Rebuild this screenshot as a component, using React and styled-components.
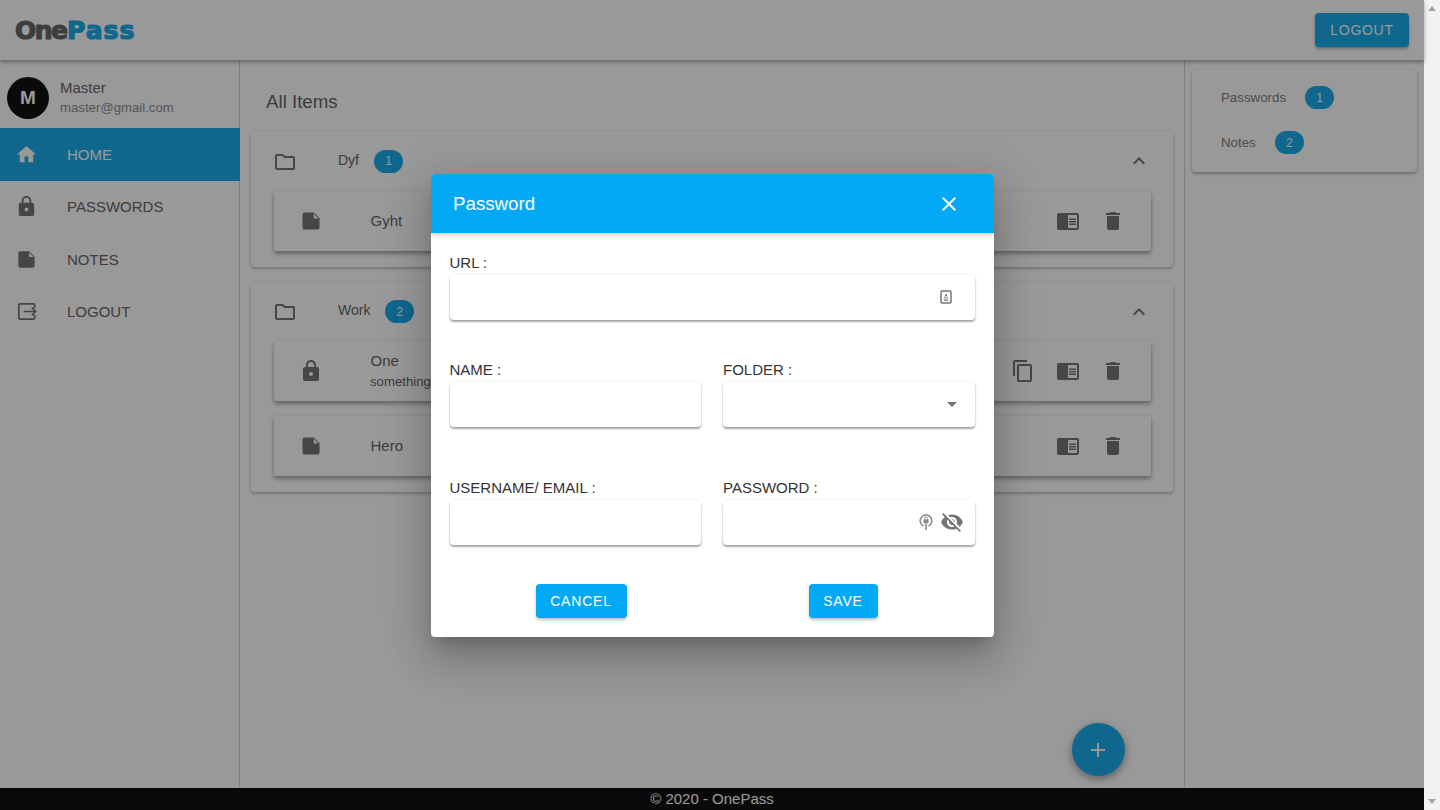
import React from "react";
import styled, { createGlobalStyle } from "styled-components";
import {
  MdHome, MdLock, MdOutlineFolder, MdKeyboardArrowUp, MdChromeReaderMode,
  MdDelete, MdContentCopy, MdClose, MdArrowDropDown, MdVisibilityOff, MdAdd,
} from "react-icons/md";

const Global = createGlobalStyle`
  * { box-sizing: border-box; }
  html, body { margin: 0; padding: 0; height: 810px; overflow: hidden; background: #fff; }
  body { font-family: "Liberation Sans", Arial, sans-serif; color: #666; }
`;

const BLUE = "#03a9f4";
const PAGE_BLUE = "#1aacec";

const Shell = styled.div`display: flex; width: 1440px; height: 810px; overflow: hidden;`;
const Page = styled.div`
  position: relative; width: 1424px; height: 810px;
  display: grid; grid-template-rows: 60px 1fr 23px; background: #fff;
`;
const Scrollbar = styled.div`
  width: 16px; height: 810px; background: #f1f3f3;
  display: flex; flex-direction: column; justify-content: space-between; align-items: center;
  padding: 6px 0;
`;
const Arrow = styled.span`
  width: 0; height: 0; border-left: 4.5px solid transparent; border-right: 4.5px solid transparent;
  ${p => p.$down ? "border-top: 5px solid #a3a3a3;" : "border-bottom: 5px solid #a3a3a3;"}
`;

const Header = styled.header`
  display: flex; align-items: center; justify-content: space-between;
  padding: 0 15px; background: #fff; z-index: 2;
  box-shadow: 0 2px 4px rgba(0,0,0,.35);
`;
const Logo = styled.div`
  font-family: "DejaVu Sans", sans-serif; font-weight: 700; font-size: 25px; letter-spacing: -1.5px;
  -webkit-text-stroke: 1.2px currentColor; color: #666; line-height: 30px; padding-top: 2px;
  span { color: ${PAGE_BLUE}; letter-spacing: 1px; margin-left: .5px; }
`;
const HeaderButton = styled.button`
  width: 94px; height: 34px; border: 0; border-radius: 4px; background: ${PAGE_BLUE}; color: #fff;
  font: 400 14px "Liberation Sans", sans-serif; letter-spacing: .7px; padding: 0;
  box-shadow: 0 2px 3px rgba(0,0,0,.3);
`;

const Body = styled.div`display: grid; grid-template-columns: 240px 1fr 240px; min-height: 0;`;

const Sidebar = styled.aside`border-right: 1px solid #cfcfcf; display: flex; flex-direction: column;`;
const UserRow = styled.div`height: 68px; display: flex; align-items: center; padding: 8px 0 0 7px; gap: 11px;`;
const Avatar = styled.div`
  width: 42px; height: 42px; border-radius: 50%; background: #111; color: #fff;
  display: flex; align-items: center; justify-content: center; font-weight: 700; font-size: 19px;
`;
const UserText = styled.div`display: flex; flex-direction: column; gap: 2px; margin-top: -2px;`;
const UserName = styled.div`font-size: 15px; line-height: 18px; color: #666;`;
const UserMail = styled.div`font-size: 13.2px; line-height: 17px; color: #8f8f8f;`;
const NavItem = styled.div`
  height: 52.5px; display: flex; align-items: center; padding-left: 15px; gap: 29px; font-size: 15px;
  margin-right: ${p => p.$active ? "-1px" : "0"};
  background: ${p => p.$active ? PAGE_BLUE : "transparent"};
  color: ${p => p.$active ? "#fff" : "#666"};
  svg { color: ${p => p.$active ? "#fff" : "#757575"}; flex: none; }
`;

const Main = styled.main`padding: 0 11px; position: relative; min-width: 0;`;
const Heading = styled.h3`
  margin: 0 0 0 15px; padding-top: 31px; height: 71px; line-height: 22px; font-size: 18.72px; font-weight: 400; color: #666;
`;
const FolderList = styled.div`display: flex; flex-direction: column; gap: 15px;`;
const FolderCard = styled.section`
  border-radius: 4px; background: #fff; padding: 0 22px 16px 23px;
  box-shadow: 0 2px 3px rgba(0,0,0,.22), 0 0 3px rgba(0,0,0,.08);
`;
const FolderHead = styled.div`
  height: ${p => p.$h}px; display: flex; align-items: center; color: #666; font-size: 14px;
  svg { color: #757575; flex: none; }
`;
const FolderIcon = styled.span`display: flex; margin: 0 41px 0 -1px; padding-top: 1px;`;
const FolderName = styled.span`margin-top: ${p => p.$lift}px; width: ${p => p.$w}px;`;
const Badge = styled.span`
  width: 29px; height: 23px; border-radius: 12px; background: ${PAGE_BLUE}; color: #fff;
  display: inline-flex; align-items: center; justify-content: center; font-size: 12px;
`;
const Spacer = styled.span`flex: 1;`;
const ItemList = styled.div`display: flex; flex-direction: column; gap: 15px;`;
const Item = styled.div`
  height: 60px; display: flex; align-items: center; padding: 0 26px 0 25px; border-radius: 2px; background: #fff;
  box-shadow: 0 3px 4px rgba(0,0,0,.32), 0 0 3px rgba(0,0,0,.1);
  svg { color: #757575; flex: none; }
`;
const ItemText = styled.div`margin-left: 47px; display: flex; flex-direction: column; gap: 3px; white-space: nowrap;`;
const ItemName = styled.div`font-size: 15px; line-height: 18px; color: #666; padding-left: .5px;`;
const ItemSub = styled.div`font-size: 13.2px; line-height: 17px; color: #666;`;
const Actions = styled.div`display: flex; gap: 21px; margin-left: auto; align-items: center;`;

const Fab = styled.button`
  position: absolute; left: 831.5px; top: 663px; width: 53px; height: 53px; border-radius: 50%; border: 0;
  background: ${PAGE_BLUE}; color: #fff; display: flex; align-items: center; justify-content: center; padding: 0;
  box-shadow: 0 3px 8px rgba(0,0,0,.4);
`;

const Aside = styled.aside`border-left: 1px solid #cfcfcf; padding: 10px 7px 0 7px;`;
const SummaryCard = styled.div`
  height: 102px; border-radius: 4px; padding: 16px 0 0 29px; background: #fff;
  display: flex; flex-direction: column; gap: 22px;
  box-shadow: 0 2px 3px rgba(0,0,0,.25), 0 0 3px rgba(0,0,0,.08);
`;
const SummaryRow = styled.div`display: flex; align-items: center; gap: 19px; font-size: 13.3px; color: #808080; height: 23px;`;

const Footer = styled.footer`
  background: #111; color: #fff; text-align: center; font-size: 15px; line-height: 22px; border-top: 1px solid #fff;
`;

const Backdrop = styled.div`
  position: absolute; inset: 0; z-index: 5; background: rgba(0,0,0,.4);
  display: flex; align-items: center; justify-content: center;
`;
const Dialog = styled.div`
  width: 563px; height: 463px; background: #fff; border-radius: 4px; overflow: hidden; margin: 1px 0 0 1px;
  box-shadow: 0 11px 15px -7px rgba(0,0,0,.2), 0 24px 38px 3px rgba(0,0,0,.14), 0 9px 46px 8px rgba(0,0,0,.12);
`;
const DialogHeader = styled.div`
  height: 59px; background: ${BLUE}; color: #fff; display: flex; align-items: center; justify-content: space-between;
  padding: 0 33px 0 22px; box-shadow: 0 2px 4px rgba(0,0,0,.22); position: relative;
`;
const DialogTitle = styled.h3`margin: 0; font-size: 18.72px; font-weight: 400;`;
const Form = styled.div`padding: 21px 19.5px 0 18.5px; display: flex; flex-direction: column;`;
const FieldRow = styled.div`
  display: grid; grid-template-columns: 1fr 1fr; column-gap: 22px; margin-top: ${p => p.$top || 0}px;
`;
const Field = styled.div`grid-column: ${p => p.$wide ? "1 / -1" : "auto"};`;
const Label = styled.div`font-size: 15px; line-height: 18px; color: #333; margin-bottom: 3px;`;
const InputBox = styled.div`
  height: 45px; border-radius: 4px; background: #fff; display: flex; align-items: center; justify-content: flex-end;
  padding: 0 ${p => p.$pr || 11}px 1px 0; gap: ${p => p.$gap || 0}px; color: #757575;
  box-shadow: 0 2px 2px rgba(0,0,0,.33), 0 0 3px rgba(0,0,0,.1);
`;
const Buttons = styled.div`display: flex; justify-content: space-between; padding: 0 97px 0 86px; margin-top: 39px;`;
const DialogButton = styled.button`
  height: 34px; width: ${p => p.$w}px; padding: 0; border: 0; border-radius: 4px; background: ${BLUE}; color: #fff;
  font: 400 14px "Liberation Sans", sans-serif; letter-spacing: .8px;
  box-shadow: 0 2px 3px rgba(0,0,0,.25);
`;

const NoteIcon = ({ side = 24 }) => (
  <svg width={side} height={side} viewBox="0 0 24 24">
    <path d="M5.6 3.5h9.2l5.7 5.7v9.2c0 1.2-1 2.1-2.1 2.1H5.6c-1.2 0-2.1-.9-2.1-2.1V5.6c0-1.2.9-2.1 2.1-2.1z" fill="#757575" />
    <path d="M14.6 4.6v4.8h4.8z" fill="#fff" />
  </svg>
);
const LogoutIcon = () => (
  <svg width="23" height="23" viewBox="0 0 24 24" fill="none" stroke="#757575" strokeWidth="1.8">
    <path d="M20.5 8.5V5.2c0-.7-.5-1.2-1.2-1.2H5.2C4.5 4 4 4.5 4 5.2v13.6c0 .7.5 1.2 1.2 1.2h14.1c.7 0 1.2-.5 1.2-1.2v-3.3" />
    <path d="M9 12h12.5M17.5 8l4 4-4 4" />
  </svg>
);
const UrlIcon = () => (
  <svg width="12" height="14" viewBox="0 0 12 14" fill="none">
    <rect x="1" y="1" width="10" height="12" rx="1" stroke="#757575" strokeWidth="1.5" />
    <path d="M6 3l1.2 3H4.8z" fill="#757575" />
    <path d="M3.8 7.2h4.4M3.8 9h4.4M3.8 10.6h4.4" stroke="#8a8a8a" strokeWidth="1" />
  </svg>
);
const KeyIcon = () => (
  <svg width="14" height="18" viewBox="0 0 14 18" fill="none">
    <path d="M4.5 13A5.8 5.8 0 1 1 9.5 13" stroke="#8a8a8a" strokeWidth="1.6" />
    <path d="M7 11v6" stroke="#8a8a8a" strokeWidth="1.6" />
    <rect x="4.5" y="6.2" width="5" height="4.4" rx=".8" fill="#8a8a8a" />
    <path d="M5.6 6.5V5.3a1.4 1.4 0 0 1 2.8 0v1.2" stroke="#8a8a8a" strokeWidth=".9" />
  </svg>
);

const Row = ({ icon: I, name, sub, copy }) => (
  <Item>
    <I size={24} side={24} />
    <ItemText>
      <ItemName>{name}</ItemName>
      {sub && <ItemSub>{sub}</ItemSub>}
    </ItemText>
    <Actions>
      {copy && <MdContentCopy size={24} />}
      <MdChromeReaderMode size={24} />
      <MdDelete size={24} />
    </Actions>
  </Item>
);

const Folder = ({ name, count, width, h, lift, children }) => (
  <FolderCard>
    <FolderHead $h={h}>
      <FolderIcon><MdOutlineFolder size={24} /></FolderIcon>
      <FolderName $w={width} $lift={lift}>{name}</FolderName>
      <Badge>{count}</Badge>
      <Spacer />
      <MdKeyboardArrowUp size={24} />
    </FolderHead>
    <ItemList>{children}</ItemList>
  </FolderCard>
);

export default function App() {
  return (
    <Shell>
      <Global />
      <Page>
        <Header>
          <Logo>One<span>Pass</span></Logo>
          <HeaderButton>LOGOUT</HeaderButton>
        </Header>
        <Body>
          <Sidebar>
            <UserRow>
              <Avatar>M</Avatar>
              <UserText>
                <UserName>Master</UserName>
                <UserMail>master@gmail.com</UserMail>
              </UserText>
            </UserRow>
            <NavItem $active><MdHome size={23} />HOME</NavItem>
            <NavItem><MdLock size={23} />PASSWORDS</NavItem>
            <NavItem><NoteIcon side={23} />NOTES</NavItem>
            <NavItem><LogoutIcon />LOGOUT</NavItem>
          </Sidebar>
          <Main>
            <Heading>All Items</Heading>
            <FolderList>
              <Folder name="Dyf" count="1" width={36} h={60} lift={-2}>
                <Row icon={NoteIcon} name="Gyht" />
              </Folder>
              <Folder name="Work" count="2" width={47} h={59} lift={-4}>
                <Row icon={MdLock} name="One" sub="something" copy />
                <Row icon={NoteIcon} name="Hero" />
              </Folder>
            </FolderList>
            <Fab><MdAdd size={24} /></Fab>
          </Main>
          <Aside>
            <SummaryCard>
              <SummaryRow>Passwords <Badge>1</Badge></SummaryRow>
              <SummaryRow>Notes <Badge>2</Badge></SummaryRow>
            </SummaryCard>
          </Aside>
        </Body>
        <Footer>© 2020 - OnePass</Footer>
        <Backdrop>
          <Dialog>
            <DialogHeader>
              <DialogTitle>Password</DialogTitle>
              <MdClose size={24} />
            </DialogHeader>
            <Form>
              <FieldRow>
                <Field $wide>
                  <Label>URL :</Label>
                  <InputBox $pr={23}><UrlIcon /></InputBox>
                </Field>
              </FieldRow>
              <FieldRow $top={41}>
                <Field>
                  <Label>NAME :</Label>
                  <InputBox />
                </Field>
                <Field>
                  <Label>FOLDER :</Label>
                  <InputBox><MdArrowDropDown size={24} /></InputBox>
                </Field>
              </FieldRow>
              <FieldRow $top={52}>
                <Field>
                  <Label>USERNAME/ EMAIL :</Label>
                  <InputBox />
                </Field>
                <Field>
                  <Label>PASSWORD :</Label>
                  <InputBox $gap={7}><KeyIcon /><MdVisibilityOff size={24} /></InputBox>
                </Field>
              </FieldRow>
              <Buttons>
                <DialogButton $w={91}>CANCEL</DialogButton>
                <DialogButton $w={69}>SAVE</DialogButton>
              </Buttons>
            </Form>
          </Dialog>
        </Backdrop>
      </Page>
      <Scrollbar><Arrow /><Arrow $down /></Scrollbar>
    </Shell>
  );
}
